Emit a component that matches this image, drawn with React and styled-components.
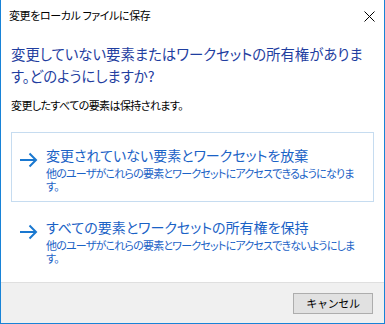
import React from 'react';
import styled, { createGlobalStyle } from 'styled-components';

const GlobalStyle = createGlobalStyle`
  html, body {
    margin: 0;
    padding: 0;
    background: #ffffff;
  }
  body {
    font-family: "Noto Sans CJK JP", "Noto Sans", sans-serif;
    font-feature-settings: "palt";
  }
`;

const Window = styled.div`
  width: 385px;
  height: 324px;
  box-sizing: border-box;
  border: 1px solid #1883d7;
  border-top: none;
  background: #ffffff;
  display: flex;
  flex-direction: column;
`;

const TitleBar = styled.div`
  height: 30px;
  display: flex;
  align-items: center;
  justify-content: space-between;
  padding: 0 9px 0 8px;
  font-size: 11px;
  letter-spacing: -0.4px;
  color: #000000;
  white-space: pre;
`;

const CloseButton = styled.div`
  width: 12px;
  height: 12px;
  display: flex;
  align-items: center;
  justify-content: center;
  margin-top: 2px;
`;

const Body = styled.div`
  flex: 1;
  padding: 13px 10px 0 10px;
`;

const MainInstruction = styled.div`
  font-size: 14.4px;
  line-height: 22px;
  color: #1f3ea0;
  width: 356px;
`;

const Content = styled.div`
  font-size: 11px;
  letter-spacing: -0.6px;
  line-height: 16px;
  color: #000000;
  margin-top: 10px;
`;

const Links = styled.div`
  margin-top: 19px;
  display: flex;
  flex-direction: column;
  gap: 2px;
`;

const CommandLink = styled.div`
  height: 70px;
  box-sizing: border-box;
  border: 1px solid ${p => (p.$hover ? '#c6dcf0' : 'transparent')};
  display: flex;
  padding: 12px 8px 0 7px;
`;

const Arrow = styled.div`
  width: 19px;
  height: 16px;
  margin-top: 4px;
  margin-right: 8px;
  flex-shrink: 0;
`;

const LinkText = styled.div`
  display: flex;
  flex-direction: column;
  color: #1a62c6;
`;

const LinkTitle = styled.div`
  font-size: 14px;
  line-height: 20px;
`;

const LinkNote = styled.div`
  font-size: 11px;
  letter-spacing: -0.8px;
  line-height: 13px;
  width: 312px;
  margin-top: 2px;
`;

const Footer = styled.div`
  height: 41px;
  border-top: 1px solid #dfdfdf;
  background: #f0f0f0;
  display: flex;
  justify-content: flex-end;
  align-items: flex-start;
  padding: 10px 11px 0 0;
  box-sizing: border-box;
`;

const Button = styled.button`
  width: 80px;
  height: 21px;
  box-sizing: border-box;
  border: 1px solid #adadad;
  background: #e1e1e1;
  font-family: inherit;
  font-size: 11px;
  letter-spacing: -0.3px;
  color: #000000;
  padding: 0;
  line-height: 19px;
`;

function ArrowIcon() {
  return (
    <svg width="19" height="16" viewBox="0 0 19 16">
      <path d="M1 8 H17" stroke="#1a78d0" strokeWidth="2" fill="none" />
      <path d="M10.5 1.5 L17 8 L10.5 14.5" stroke="#1a78d0" strokeWidth="2" fill="none" />
    </svg>
  );
}

const options = [
  {
    title: '変更されていない要素とワークセットを放棄',
    note: '他のユーザがこれらの要素とワークセットにアクセスできるようになります。',
    hover: true,
  },
  {
    title: 'すべての要素とワークセットの所有権を保持',
    note: '他のユーザがこれらの要素とワークセットにアクセスできないようにします。',
    hover: false,
  },
];

export default function App() {
  return (
    <>
      <GlobalStyle />
      <Window>
        <TitleBar>
          <span>変更をローカル ファイルに保存</span>
          <CloseButton>
            <svg width="11" height="11" viewBox="0 0 11 11">
              <path d="M0.5 0.5 L10.5 10.5 M10.5 0.5 L0.5 10.5" stroke="#000" strokeWidth="1" />
            </svg>
          </CloseButton>
        </TitleBar>
        <Body>
          <MainInstruction>
            変更していない要素またはワークセットの所有権があります。どのようにしますか?
          </MainInstruction>
          <Content>変更したすべての要素は保持されます。</Content>
          <Links>
            {options.map((o, i) => (
              <CommandLink key={i} $hover={o.hover}>
                <Arrow>
                  <ArrowIcon />
                </Arrow>
                <LinkText>
                  <LinkTitle>{o.title}</LinkTitle>
                  <LinkNote>{o.note}</LinkNote>
                </LinkText>
              </CommandLink>
            ))}
          </Links>
        </Body>
        <Footer>
          <Button>キャンセル</Button>
        </Footer>
      </Window>
    </>
  );
}
